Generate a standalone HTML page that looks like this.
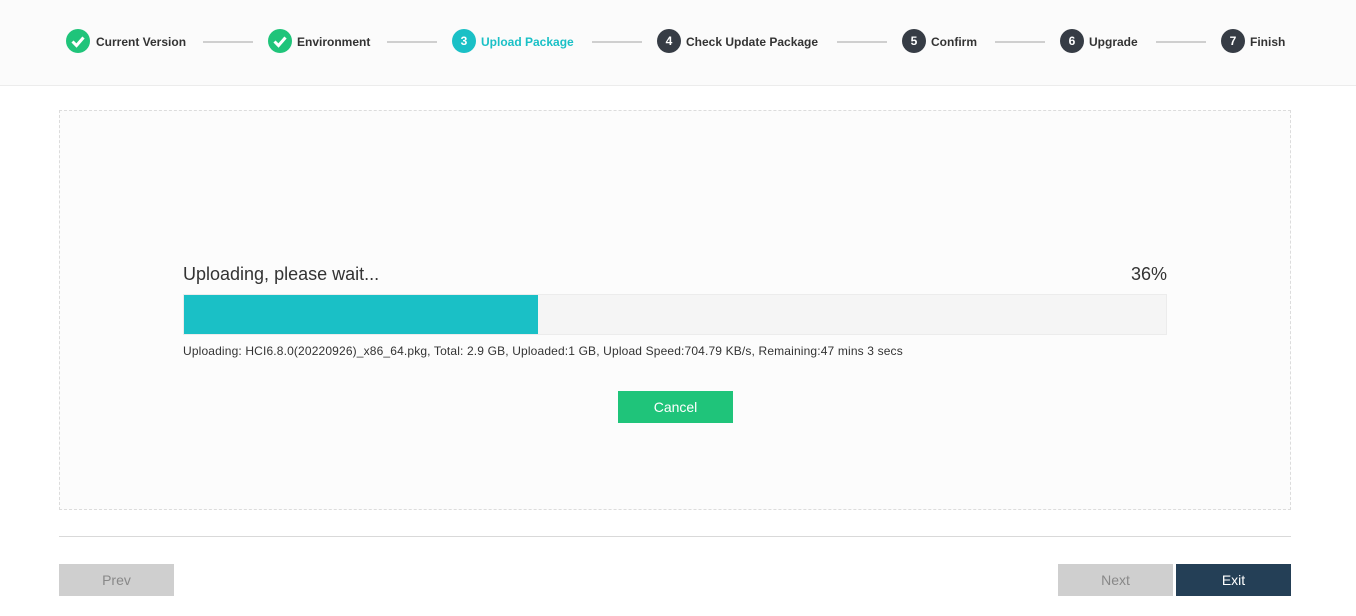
<!DOCTYPE html>
<html><head><style>
body{margin:0;width:1356px;height:616px;background:#fff;font-family:"Liberation Sans",Arial,sans-serif;position:relative;overflow:hidden}
.a{position:absolute}
.hd{left:0;top:0;width:1356px;height:85px;background:#fbfbfb;border-bottom:1px solid #ececec}
.c{width:24px;height:24px;border-radius:50%;top:29px;color:#fff;font-size:12px;font-weight:bold;text-align:center;line-height:24px;background:#363c45}
.t{top:35px;font-size:12px;font-weight:bold;color:#333;line-height:14px}
.l{top:41px;height:2px;background:#cfcfcf;width:50px}
.btn{height:32px;line-height:32px;text-align:center;font-size:14px;width:115px}
</style></head><body>
<div class="a hd"></div>
<div class="a c" style="left:66px;background:#1fc47a"><svg width="24" height="24"><path d="M6.5 12.5l4 4 7-8" stroke="#fff" stroke-width="3" fill="none"/></svg></div>
<div class="a t" style="left:96px">Current Version</div>
<div class="a l" style="left:203px"></div>
<div class="a c" style="left:268px;background:#1fc47a"><svg width="24" height="24"><path d="M6.5 12.5l4 4 7-8" stroke="#fff" stroke-width="3" fill="none"/></svg></div>
<div class="a t" style="left:297px">Environment</div>
<div class="a l" style="left:387px"></div>
<div class="a c" style="left:452px;background:#1ac0c6">3</div>
<div class="a t" style="left:481px;color:#1ac0c6">Upload Package</div>
<div class="a l" style="left:592px"></div>
<div class="a c" style="left:657px">4</div>
<div class="a t" style="left:686px">Check Update Package</div>
<div class="a l" style="left:837px"></div>
<div class="a c" style="left:902px">5</div>
<div class="a t" style="left:931px">Confirm</div>
<div class="a l" style="left:995px"></div>
<div class="a c" style="left:1060px">6</div>
<div class="a t" style="left:1089px">Upgrade</div>
<div class="a l" style="left:1156px"></div>
<div class="a c" style="left:1221px">7</div>
<div class="a t" style="left:1250px">Finish</div>

<div class="a" style="left:59px;top:110px;width:1230px;height:398px;border:1px dashed #dcdcdc;background:#fcfcfc"></div>
<div class="a" style="left:183px;top:264px;font-size:18px;color:#333">Uploading, please wait...</div>
<div class="a" style="left:1131px;top:264px;font-size:18px;color:#333">36%</div>
<div class="a" style="left:183px;top:294px;width:982px;height:39px;background:#f5f5f5;border:1px solid #ececec"></div>
<div class="a" style="left:184px;top:295px;width:354px;height:39px;background:#1ac0c6"></div>
<div class="a" style="left:183px;top:344px;font-size:12px;color:#333;letter-spacing:0.15px">Uploading: HCI6.8.0(20220926)_x86_64.pkg, Total: 2.9 GB, Uploaded:1 GB, Upload Speed:704.79 KB/s, Remaining:47 mins 3 secs</div>
<div class="a btn" style="left:618px;top:391px;background:#1fc47a;color:#fff">Cancel</div>
<div class="a" style="left:59px;top:536px;width:1232px;height:1px;background:#d9d9d9"></div>
<div class="a btn" style="left:59px;top:564px;background:#cfcfcf;color:#888">Prev</div>
<div class="a btn" style="left:1058px;top:564px;background:#cfcfcf;color:#888">Next</div>
<div class="a btn" style="left:1176px;top:564px;background:#243f56;color:#fff">Exit</div>
</body></html>
